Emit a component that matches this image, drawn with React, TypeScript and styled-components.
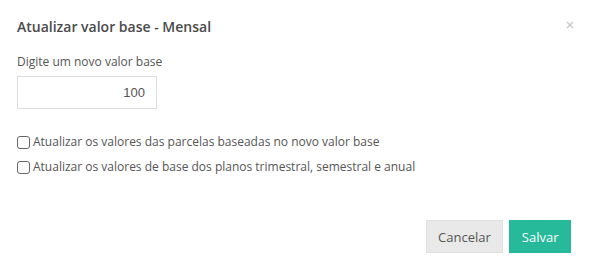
import React from "react";
import styled, { createGlobalStyle } from "styled-components";

const GlobalStyle = createGlobalStyle`
  html, body {
    margin: 0;
    padding: 0;
    background: #ffffff;
  }
  body {
    font-family: "Open Sans", "Liberation Sans", sans-serif;
    color: #555;
  }
`;

// ============== Style Component =============
const Modal = styled.div`
  width: 590px;
  height: 264px;
  box-sizing: border-box;
  background: #fff;
  display: flex;
  flex-direction: column;
`;

const Header = styled.div`
  display: flex;
  align-items: center;
  justify-content: space-between;
  padding: 16px 15px 0 17px;
  height: 22px;
`;

const Title = styled.h4`
  margin: 0;
  font-size: 14px;
  font-weight: 600;
  color: #4a4a4a;
  line-height: 22px;
`;

const Close = styled.button`
  border: 0;
  background: none;
  padding: 0;
  width: 10px;
  height: 10px;
  margin-top: -4px;
  display: flex;
  align-items: center;
  justify-content: center;
  cursor: pointer;
`;

const Body = styled.div`
  padding: 16px 17px 0 17px;
  display: flex;
  flex-direction: column;
`;

const Label = styled.label`
  font-size: 12px;
  color: #555;
  line-height: 16px;
  margin-bottom: 6px;
`;

const ValueInput = styled.input`
  width: 140px;
  height: 33px;
  box-sizing: border-box;
  border: 1px solid #ddd;
  padding: 0 11px;
  text-align: right;
  font-family: "Liberation Sans", Arial, sans-serif;
  font-size: 13px;
  color: #555;
  outline: none;
`;

const CheckList = styled.div`
  display: flex;
  flex-direction: column;
  gap: 7px;
  margin-top: 24px;
`;

const CheckRow = styled.label`
  display: flex;
  align-items: center;
  gap: 3px;
  font-size: 12px;
  color: #555;
  line-height: 18px;
`;

const Box = styled.input`
  appearance: none;
  margin: 0;
  width: 13px;
  height: 13px;
  border: 1px solid #666;
  border-radius: 3px;
  background: #fff;
`;

const Footer = styled.div`
  margin-top: auto;
  display: flex;
  justify-content: flex-end;
  gap: 6px;
  padding: 0 19px 11px 0;
`;

const Button = styled.button<{ $primary?: boolean }>`
  height: 33px;
  padding: 0 11.5px;
  font-family: "Open Sans", "Liberation Sans", sans-serif;
  font-size: 13px;
  border-radius: 0;
  cursor: pointer;
  border: 1px solid ${(p) => (p.$primary ? "#26b99a" : "#e0e0e0")};
  background: ${(p) => (p.$primary ? "#26b99a" : "#e9e9e9")};
  color: ${(p) => (p.$primary ? "#fff" : "#555")};
`;

// ========================================

export default function App() {
  return (
    <>
      <GlobalStyle />
      <Modal>
        <Header>
          <Title>Atualizar valor base - Mensal</Title>
          <Close aria-label="Fechar">
            <svg width="8" height="8" viewBox="0 0 8 8">
              <path d="M1 1L7 7M7 1L1 7" stroke="#c8c8c8" strokeWidth="1.4" />
            </svg>
          </Close>
        </Header>
        <Body>
          <Label>Digite um novo valor base</Label>
          <ValueInput defaultValue="100" />
          <CheckList>
            <CheckRow>
              <Box type="checkbox" />
              Atualizar os valores das parcelas baseadas no novo valor base
            </CheckRow>
            <CheckRow>
              <Box type="checkbox" />
              Atualizar os valores de base dos planos trimestral, semestral e anual
            </CheckRow>
          </CheckList>
        </Body>
        <Footer>
          <Button>Cancelar</Button>
          <Button $primary>Salvar</Button>
        </Footer>
      </Modal>
    </>
  );
}
